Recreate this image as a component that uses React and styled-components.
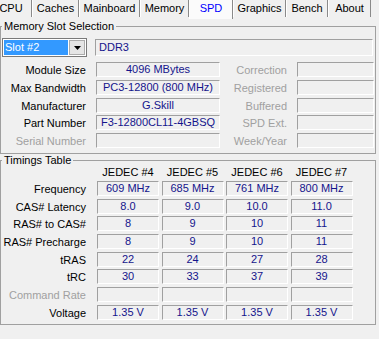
import React from 'react';
import styled, { createGlobalStyle } from 'styled-components';

const Global = createGlobalStyle`
  html, body { margin: 0; padding: 0; background: #f0f0f0; }
  body { font-family: "Liberation Sans", Arial, sans-serif; font-size: 11px; color: #000; }
  #root { width: 379px; height: 339px; overflow: hidden; }
`;

const Window = styled.div`
  width: 379px;
  height: 339px;
  background: #f0f0f0;
  display: flex;
  flex-direction: column;
  overflow: hidden;
`;

const TabStrip = styled.div`
  display: flex;
  height: 17px;
  align-items: flex-start;
`;

const Tab = styled.div`
  flex: 0 0 ${(p) => p.$w}px;
  margin-left: ${(p) => p.$ml || 0}px;
  height: ${(p) => (p.$active ? 19 : 17)}px;
  box-sizing: border-box;
  border-left: 1px solid #ffffff;
  border-right: 1px solid #8a8a8a;
  background: ${(p) => (p.$active ? '#fbfbfb' : '#f0f0f0')};
  color: ${(p) => (p.$active ? '#0000ff' : '#000')};
  line-height: 17px;
  text-align: center;
  white-space: nowrap;
`;

const Panel = styled.div`
  padding: 9px 3px 0 0;
`;

const Group = styled.div`
  border: 1px solid #a0a0a0;
  margin-top: ${(p) => p.$mt || 0}px;
  padding: 0 2px ${(p) => p.$pb}px 0;
`;

const GroupTitle = styled.div`
  display: table;
  margin: -7px 0 0 1px;
  padding: 0 2px;
  height: 13px;
  line-height: 13px;
  background: #f0f0f0;
  white-space: nowrap;
`;

const SlotRow = styled.div`
  display: flex;
  align-items: center;
  margin-top: 5px;
  padding-left: 1px;
  height: 19px;
`;

const Select = styled.div`
  box-sizing: border-box;
  width: 85px;
  height: 19px;
  border: 1px solid #7a7a7a;
  background: #fff;
  padding: 1px;
  display: flex;
  gap: 1px;
`;

const SelectValue = styled.div`
  flex: 1;
  background: #3399ff;
  color: #fff;
  line-height: 15px;
  padding-left: 1px;
  white-space: nowrap;
`;

const SelectButton = styled.div`
  width: 16px;
  box-sizing: border-box;
  border: 1px solid #acacac;
  background: #e5e5e5;
  display: flex;
  align-items: center;
  justify-content: center;
`;

const Field = styled.div`
  box-sizing: border-box;
  height: ${(p) => p.$h || 15}px;
  border-top: 1px solid #a0a0a0;
  border-left: 1px solid #a0a0a0;
  border-bottom: 1px solid #ffffff;
  border-right: 1px solid #ffffff;
  color: #14148c;
  line-height: ${(p) => (p.$h || 15) - 2}px;
  text-align: ${(p) => p.$align || 'center'};
  padding: 0 ${(p) => (p.$align === 'left' ? 3 : 0)}px;
  white-space: nowrap;
  overflow: hidden;
`;

const TypeField = styled(Field)`
  flex: 1;
  margin-left: 8px;
`;

const InfoGrid = styled.div`
  display: grid;
  grid-template-columns: 84px 124px 57px 77px;
  column-gap: 10px;
  row-gap: 2.75px;
  margin-top: 5px;
  padding-left: 1px;
`;

const Label = styled.div`
  text-align: right;
  line-height: 16px;
  height: 15px;
  white-space: nowrap;
  color: ${(p) => (p.$dim ? '#a0a0a0' : '#000')};
  padding-right: ${(p) => p.$pr || 0}px;
`;

const TimingGrid = styled.div`
  display: grid;
  grid-template-columns: 92.5px repeat(4, 62px);
  column-gap: 2.5px;
  row-gap: 2.7px;
  padding-left: 1px;
  margin-top: 2px;
`;

const HeaderRow = styled.div`
  display: grid;
  grid-template-columns: 92.5px repeat(4, 62px);
  column-gap: 2.5px;
  padding-left: 1px;
  margin-top: -1px;
  height: 13px;
  line-height: 13px;
`;

const ColHead = styled.div`
  text-align: center;
  white-space: nowrap;
`;

const Arrow = () => (
  <svg width="7" height="4" viewBox="0 0 7 4">
    <polygon points="0,0 7,0 3.5,4" fill="#000" />
  </svg>
);

const tabs = [
  { t: 'CPU', w: 42, ml: -10 },
  { t: 'Caches', w: 47 },
  { t: 'Mainboard', w: 61 },
  { t: 'Memory', w: 49 },
  { t: 'SPD', w: 44, active: true },
  { t: 'Graphics', w: 53 },
  { t: 'Bench', w: 42 },
  { t: 'About', w: 43 },
];

const info = [
  ['Module Size', '4096 MBytes', 'Correction'],
  ['Max Bandwidth', 'PC3-12800 (800 MHz)', 'Registered'],
  ['Manufacturer', 'G.Skill', 'Buffered'],
  ['Part Number', 'F3-12800CL11-4GBSQ', 'SPD Ext.'],
  ['Serial Number', '', 'Week/Year', true],
];

const timings = [
  ['Frequency', ['609 MHz', '685 MHz', '761 MHz', '800 MHz']],
  ['CAS# Latency', ['8.0', '9.0', '10.0', '11.0']],
  ['RAS# to CAS#', ['8', '9', '10', '11']],
  ['RAS# Precharge', ['8', '9', '10', '11']],
  ['tRAS', ['22', '24', '27', '28']],
  ['tRC', ['30', '33', '37', '39']],
  ['Command Rate', ['', '', '', ''], true],
  ['Voltage', ['1.35 V', '1.35 V', '1.35 V', '1.35 V']],
];

export default function App() {
  return (
    <Window>
      <Global />
      <TabStrip>
        {tabs.map((tb) => (
          <Tab key={tb.t} $w={tb.w} $ml={tb.ml} $active={tb.active}>
            {tb.t}
          </Tab>
        ))}
      </TabStrip>
      <Panel>
        <Group $pb={5}>
          <GroupTitle>Memory Slot Selection</GroupTitle>
          <SlotRow>
            <Select>
              <SelectValue>Slot #2</SelectValue>
              <SelectButton>
                <Arrow />
              </SelectButton>
            </Select>
            <TypeField $h={17} $align="left">DDR3</TypeField>
          </SlotRow>
          <InfoGrid>
            {info.map(([l, v, r, dim]) => (
              <React.Fragment key={l}>
                <Label $dim={dim}>{l}</Label>
                <Field>{v}</Field>
                <Label $dim>{r}</Label>
                <Field />
              </React.Fragment>
            ))}
          </InfoGrid>
        </Group>
        <Group $mt={6} $pb={4}>
          <GroupTitle>Timings Table</GroupTitle>
          <HeaderRow>
            <div />
            <ColHead>JEDEC #4</ColHead>
            <ColHead>JEDEC #5</ColHead>
            <ColHead>JEDEC #6</ColHead>
            <ColHead>JEDEC #7</ColHead>
          </HeaderRow>
          <TimingGrid>
            {timings.map(([l, vals, dim]) => (
              <React.Fragment key={l}>
                <Label $dim={dim} $pr={8.5}>{l}</Label>
                {vals.map((v, i) => (
                  <Field key={i}>{v}</Field>
                ))}
              </React.Fragment>
            ))}
          </TimingGrid>
        </Group>
      </Panel>
    </Window>
  );
}
